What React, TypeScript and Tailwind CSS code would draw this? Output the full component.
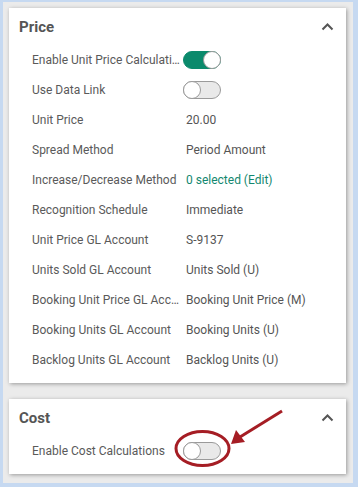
import React from 'react';

type Row = { label: string; value?: string; link?: boolean; toggle?: 'on' | 'off' };

const priceRows: Row[] = [
  { label: 'Enable Unit Price Calculations', toggle: 'on' },
  { label: 'Use Data Link', toggle: 'off' },
  { label: 'Unit Price', value: '20.00' },
  { label: 'Spread Method', value: 'Period Amount' },
  { label: 'Increase/Decrease Method', value: '0 selected (Edit)', link: true },
  { label: 'Recognition Schedule', value: 'Immediate' },
  { label: 'Unit Price GL Account', value: 'S-9137' },
  { label: 'Units Sold GL Account', value: 'Units Sold (U)' },
  { label: 'Booking Unit Price GL Account', value: 'Booking Unit Price (M)' },
  { label: 'Booking Units GL Account', value: 'Booking Units (U)' },
  { label: 'Backlog Units GL Account', value: 'Backlog Units (U)' },
];

const Toggle: React.FC<{ on: boolean }> = ({ on }) => (
  <div
    className={`relative w-[38px] h-[18px] rounded-full border ${
      on ? 'bg-[#0b8a6c] border-[#0b8a6c]' : 'bg-[#e9e9e9] border-[#9a9a9a]'
    }`}
  >
    <div
      className={`absolute top-[-1px] w-[18px] h-[18px] rounded-full bg-white border border-[#9a9a9a] ${
        on ? 'right-[-1px]' : 'left-[-1px]'
      }`}
    />
  </div>
);

const Chevron = () => (
  <svg width="13" height="8" viewBox="0 0 13 8" className="mr-[12px]">
    <path d="M1.5 6.5 L6.5 1.5 L11.5 6.5" fill="none" stroke="#555" strokeWidth="2" />
  </svg>
);

const FieldRow: React.FC<{ row: Row }> = ({ row }) => (
  <div className="flex items-center h-[30px] pl-[23px]">
    <div className="w-[150px] truncate text-[#5a5a5a]">{row.label}</div>
    {row.toggle ? (
      <div className="ml-[1px]">
        <Toggle on={row.toggle === 'on'} />
      </div>
    ) : (
      <div className={`ml-[4px] ${row.link ? 'text-[#13876f]' : 'text-[#555]'}`}>{row.value}</div>
    )}
  </div>
);

const Card: React.FC<{ title: string; children: React.ReactNode; className?: string }> = ({ title, children, className }) => (
  <div className={`bg-white shadow-[1px_1px_4px_rgba(0,0,0,0.35)] pt-[8px] ${className ?? ''}`}>
    <div className="h-[22px] flex items-center justify-between pl-[10px]">
      <span className="text-[15px] font-bold text-[#555]">{title}</span>
      <Chevron />
    </div>
    {children}
  </div>
);

export default function App() {
  return (
    <div
      className="relative w-[358px] h-[487px] border-l-[3px] border-t-[2px] border-r-[5px] border-b-[4px] border-[#c6d9f1] bg-[#ebebeb] pl-[6px] pt-[6px] pr-[7px] text-[12px]"
      style={{ fontFamily: 'Roboto, "Liberation Sans", sans-serif' }}
    >
      <Card title="Price" className="pb-[8px]">
        <div className="mt-[7px]">
          {priceRows.map(r => (
            <FieldRow key={r.label} row={r} />
          ))}
        </div>
      </Card>
      <Card title="Cost" className="mt-[16px] pb-[8px]">
        <div className="mt-[7px]">
          <FieldRow row={{ label: 'Enable Cost Calculations', toggle: 'off' }} />
        </div>
      </Card>
      <svg
        className="absolute left-[-3px] top-[-2px] pointer-events-none"
        width="358"
        height="487"
        viewBox="0 0 358 487"
      >
        <ellipse cx="202.5" cy="448.5" rx="26.5" ry="17" fill="none" stroke="#a51d24" strokeWidth="3" />
        <line x1="282" y1="411" x2="240" y2="437" stroke="#a51d24" strokeWidth="3" />
        <polygon points="231,444 236,430 245,442" fill="#a51d24" />
      </svg>
    </div>
  );
}
